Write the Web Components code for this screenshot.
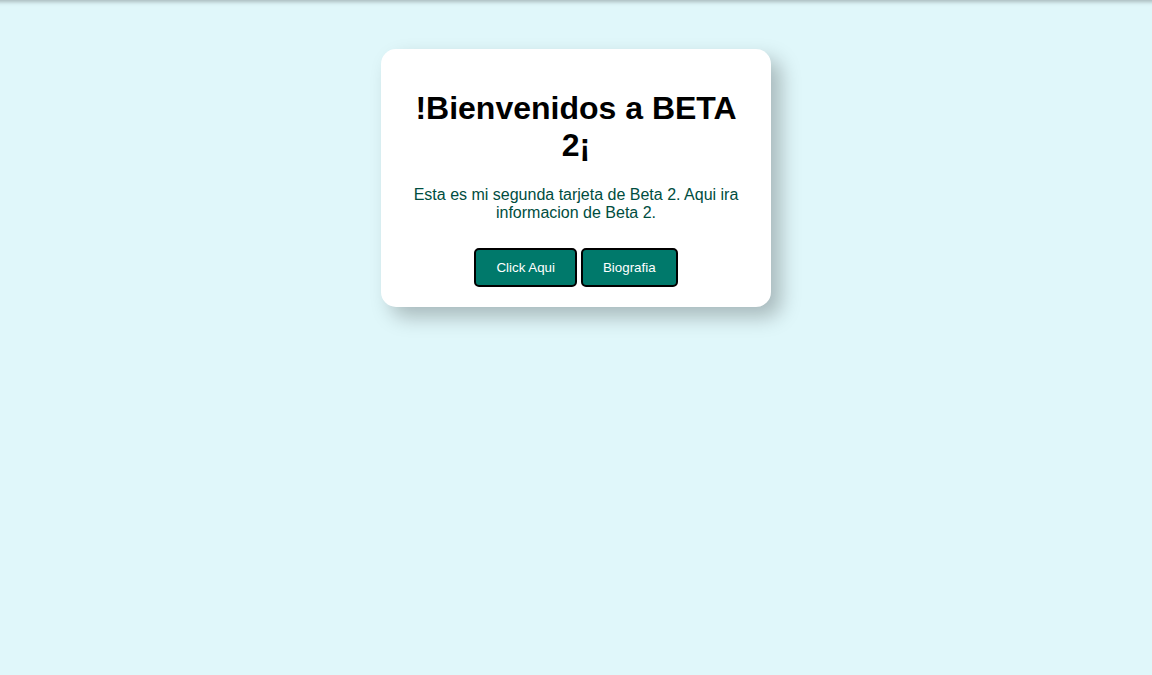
<!DOCTYPE html>
<html lang="es">
<head>
<meta charset="utf-8">
<title>Beta 2</title>
<style>
body { margin: 0; min-height: 100vh; background: #e0f7fa; font-family: Arial, "Liberation Sans", sans-serif; }
</style>
</head>
<body>
<beta-page>
  <beta-card>
    <span slot="title">!Bienvenidos a BETA 2¡</span>
    <span slot="text">Esta es mi segunda tarjeta de Beta 2. Aqui ira informacion de Beta 2.</span>
    <beta-button slot="actions">Click Aqui</beta-button>
    <beta-button slot="actions">Biografia</beta-button>
  </beta-card>
</beta-page>
<script>
class BetaPage extends HTMLElement {
  constructor() {
    super();
    this.attachShadow({ mode: "open" }).innerHTML = `
      <style>
        :host { display: flow-root; overflow: hidden; }
        header { height: 20px; margin: -20px -10px 0; box-shadow: 0 2px 4px rgba(0, 0, 0, 0.25); }
        main { display: flex; justify-content: center; padding: 49px 20px; }
      </style>
      <header></header>
      <main><slot></slot></main>`;
  }
}
class BetaCard extends HTMLElement {
  constructor() {
    super();
    this.attachShadow({ mode: "open" }).innerHTML = `
      <style>
        :host { display: block; width: 100%; max-width: 350px; padding: 20px; border-radius: 15px; background: #fff; box-shadow: 10px 10px 20px rgba(0, 0, 0, 0.25); text-align: center; }
        h1 { margin: 21px 0 22px; font-size: 32px; line-height: 37px; color: #000; }
        p { margin: 0 0 16px; font-size: 16px; line-height: 18px; color: #004d40; }
        .actions { display: flex; justify-content: center; gap: 4px; padding-top: 10px; }
      </style>
      <h1><slot name="title"></slot></h1>
      <p><slot name="text"></slot></p>
      <div class="actions"><slot name="actions"></slot></div>`;
  }
}
class BetaButton extends HTMLElement {
  constructor() {
    super();
    this.attachShadow({ mode: "open" }).innerHTML = `
      <style>
        :host { display: block; }
        button { display: block; padding: 10px 20px; border: 2px solid #000; border-radius: 5px; background: #00796b; color: #fff; font-family: inherit; line-height: 15px; cursor: pointer; }
      </style>
      <button type="button"><slot></slot></button>`;
  }
}
customElements.define("beta-page", BetaPage);
customElements.define("beta-card", BetaCard);
customElements.define("beta-button", BetaButton);
</script>
</body>
</html>
